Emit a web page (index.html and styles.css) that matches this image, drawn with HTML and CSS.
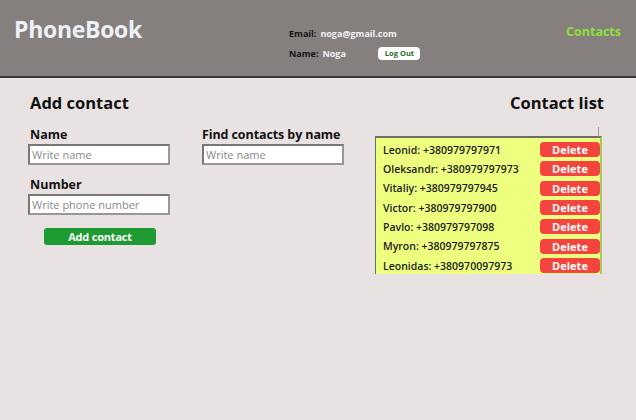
FILE: index.html
```html
<!DOCTYPE html>
<html>
<head>
<meta charset="utf-8">
<link rel="stylesheet" href="styles.css">
</head>
<body>
<header class="header">
  <div class="logo">PhoneBook</div>
  <div class="user">
    <div class="user-row"><span class="lbl">Email:</span><span class="val">noga@gmail.com</span></div>
    <div class="user-row"><span class="lbl">Name:</span><span class="val name">Noga</span><button class="logout">Log Out</button></div>
  </div>
  <a class="nav">Contacts</a>
</header>
<main class="main">
  <section class="form-col">
    <h2 class="title">Add contact</h2>
    <label class="label">Name</label>
    <input class="input" placeholder="Write name">
    <label class="label second">Number</label>
    <input class="input" placeholder="Write phone number">
    <button class="add">Add contact</button>
  </section>
  <section class="find-col">
    <label class="label find">Find contacts by name</label>
    <input class="input" placeholder="Write name">
  </section>
  <section class="list-col">
    <h2 class="title right">Contact list</h2>
    <div class="scroll-mark"></div>
    <ul class="list">
      <li class="item"><span>Leonid: +380979797971</span><button class="del">Delete</button></li>
      <li class="item"><span>Oleksandr: +380979797973</span><button class="del">Delete</button></li>
      <li class="item"><span>Vitaliy: +380979797945</span><button class="del">Delete</button></li>
      <li class="item"><span>Victor: +380979797900</span><button class="del">Delete</button></li>
      <li class="item"><span>Pavlo: +380979797098</span><button class="del">Delete</button></li>
      <li class="item"><span>Myron: +380979797875</span><button class="del">Delete</button></li>
      <li class="item"><span>Leonidas: +380970097973</span><button class="del">Delete</button></li>
    </ul>
  </section>
</main>
</body>
</html>
```
FILE: styles.css
```css
* { box-sizing: border-box; }
html, body { margin: 0; padding: 0; }
body {
  background: #e8e2e2;
  font-family: "Open Sans", "Liberation Sans", sans-serif;
  width: 636px;
  height: 420px;
  overflow: hidden;
}
.header {
  height: 78px;
  background: #857f7e;
  border-bottom: 2px solid #3a3636;
  display: flex;
  align-items: flex-start;
  padding: 0 14px;
}
.logo {
  color: #eef2f8;
  font-size: 23px;
  font-weight: 700;
  letter-spacing: -0.3px;
  margin-top: 13px;
  width: 275px;
}
.user {
  margin-top: 25px;
  display: flex;
  flex-direction: column;
  gap: 4px;
  font-size: 9px;
  font-weight: 700;
}
.user-row { display: flex; align-items: center; height: 16px; }
.lbl { color: #151515; }
.val { color: #f2f2f2; margin-left: 4px; }
.name { width: 56px; }
.logout {
  background: #fff;
  color: #2a6a2a;
  border: none;
  border-radius: 4px;
  font-family: inherit;
  font-size: 7.5px;
  font-weight: 700;
  padding: 0 5px;
  height: 13px;
  width: 42px;
}
.nav {
  margin-left: auto;
  margin-top: 23px;
  margin-right: 1px;
  color: #8de23a;
  font-size: 12.5px;
  font-weight: 700;
}
.main {
  display: flex;
  padding: 0 0 0 30px;
}
.form-col {
  width: 172px;
  display: flex;
  flex-direction: column;
  align-items: flex-start;
}
.title {
  margin: 13px 0 0;
  font-size: 16.5px;
  font-weight: 700;
  color: #111;
  height: 24px;
}
.label {
  font-size: 12.5px;
  font-weight: 700;
  color: #111;
  margin-top: 11px;
  height: 18px;
}
.label.second { margin-top: 11px; }
.input {
  width: 142px;
  height: 21px;
  margin-left: -2px;
  border: 2px solid #7a7676;
  border-right-color: #9a9696;
  border-bottom-color: #9a9696;
  background: #fff;
  font-family: inherit;
  font-size: 11px;
  padding: 0 2px;
  outline: none;
}
.input::placeholder { color: #8a8a8a; }
.add {
  margin-top: 13px;
  margin-left: 14px;
  width: 112px;
  height: 17px;
  background: #1d9a31;
  color: #fff;
  border: none;
  border-radius: 3px;
  font-family: inherit;
  font-size: 11px;
  font-weight: 700;
  letter-spacing: -0.2px;
  padding: 0;
}
.find-col {
  padding-top: 37px;
  display: flex;
  flex-direction: column;
  width: 170px;
}
.find-col .input { margin-left: 0; }
.label.find { margin-top: 11px; letter-spacing: -0.1px; }
.list-col {
  margin-left: auto;
  width: 260px;
  position: relative;
  display: flex;
  flex-direction: column;
  align-items: flex-end;
  padding-right: 32px;
}
.title.right { text-align: right; }
.scroll-mark {
  position: absolute;
  right: 37px;
  top: 49px;
  width: 1px;
  height: 10px;
  background: #9a9898;
}
.list {
  margin: 21px 2px 0 0;
  padding: 2px 0 0 6px;
  list-style: none;
  width: 227px;
  height: 138px;
  overflow: hidden;
  background: #eeff80;
  border-top: 2px solid #6f6d6a;
  border-left: 1px solid #6f6d6a;
  border-right: 2px solid #a8c85a;
}
.item {
  display: flex;
  align-items: center;
  justify-content: space-between;
  height: 19.33px;
  font-size: 10.5px;
  font-weight: 600;
  color: #1c1c1c;
  padding-left: 1px;
}
.del {
  width: 60px;
  height: 15px;
  background: #f5443d;
  color: #fff;
  border: none;
  border-radius: 4px;
  font-family: inherit;
  font-size: 11px;
  font-weight: 700;
  padding: 0;
}
```
